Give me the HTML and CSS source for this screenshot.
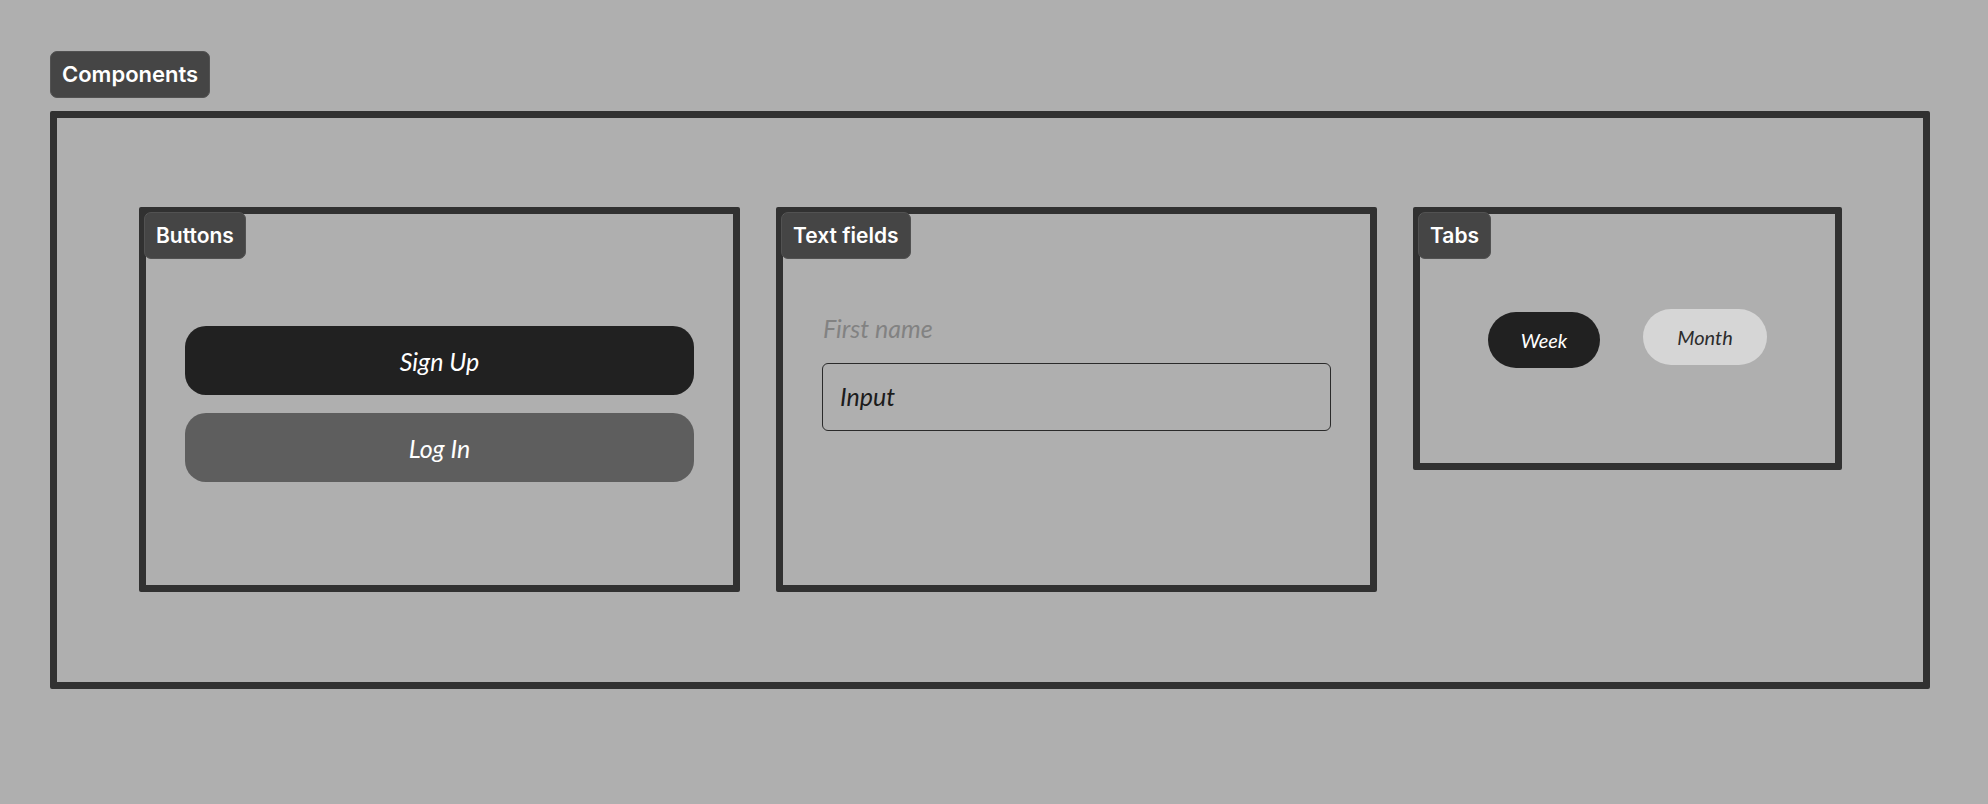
FILE: index.html
```html
<!DOCTYPE html>
<html lang="en">
<head>
  <meta charset="UTF-8">
  <meta name="viewport" content="width=device-width, initial-scale=1.0">
  <title>Components</title>
  <link rel="stylesheet" href="styles.css">
</head>
<body>
  <div class="badge page-badge">Components</div>

  <div class="frame">
    <section class="panel panel-wide">
      <div class="badge panel-badge">Buttons</div>
      <div class="button-stack">
        <button class="btn btn-primary">Sign Up</button>
        <button class="btn btn-secondary">Log In</button>
      </div>
    </section>

    <section class="panel panel-wide">
      <div class="badge panel-badge">Text fields</div>
      <div class="field">
        <label class="field-label" for="firstName">First name</label>
        <div class="field-input" id="firstName">Input</div>
      </div>
    </section>

    <section class="panel panel-tabs">
      <div class="badge panel-badge">Tabs</div>
      <div class="tabs">
        <span class="tab tab-active">Week</span>
        <span class="tab tab-idle">Month</span>
      </div>
    </section>
  </div>
</body>
</html>
```

FILE: styles.css
```css
body {
  margin: 0;
  padding: 51px 0 0 50px;
  background-color: #afafaf;
  font-family: Inter, "Noto Sans", sans-serif;
}
.badge {
  box-sizing: border-box;
  height: 47px;
  padding: 0 11px;
  background-color: #454545;
  border: 1px solid #525252;
  border-radius: 7px;
  color: #fff;
  font-size: 22px;
  font-weight: 600;
  line-height: 45px;
  white-space: nowrap;
}
.page-badge {
  display: inline-block;
  margin-bottom: 13px;
}
.frame {
  box-sizing: border-box;
  width: 1880px;
  height: 578px;
  border: 7px solid #313131;
  border-radius: 2px;
  display: flex;
  align-items: flex-start;
  gap: 36px;
  padding: 89px 0 0 82px;
}
.panel {
  position: relative;
  box-sizing: border-box;
  border: 7px solid #313131;
  border-radius: 2px;
}
.panel-wide {
  width: 601px;
  height: 385px;
  padding: 0 39px 0 39px;
}
.panel-tabs {
  width: 429px;
  height: 263px;
}
.panel-badge {
  position: absolute;
  top: -2px;
  left: -2px;
  font-size: 21px;
}

/* buttons */
.button-stack {
  display: flex;
  flex-direction: column;
  gap: 18px;
  padding-top: 112px;
}
.btn {
  height: 69px;
  border: none;
  border-radius: 21px;
  color: #fff;
  font-family: Lato, "Open Sans", sans-serif;
  font-style: italic;
  font-size: 25px;
}
.btn-primary {
  background-color: #212121;
}
.btn-secondary {
  background-color: #5e5e5e;
}

/* text field */
.field {
  padding-top: 97px;
}
.field-label {
  display: block;
  padding-left: 1px;
  margin-bottom: 18px;
  color: #828282;
  font-family: Lato, "Open Sans", sans-serif;
  font-style: italic;
  font-size: 25px;
  line-height: 34px;
}
.field-input {
  box-sizing: border-box;
  height: 68px;
  padding-left: 17px;
  border: 1.5px solid #2a2a2a;
  border-radius: 6px;
  color: #1c1c1c;
  font-family: Lato, "Open Sans", sans-serif;
  font-style: italic;
  font-size: 25px;
  line-height: 65px;
}

/* tabs */
.tabs {
  display: flex;
  align-items: center;
  gap: 43px;
  padding: 92px 0 0 68px;
}
.tab {
  height: 56px;
  border-radius: 28px;
  font-family: Lato, "Open Sans", sans-serif;
  font-style: italic;
  font-size: 20px;
  line-height: 56px;
  text-align: center;
}
.tab-active {
  width: 112px;
  margin-top: 6px;
  background-color: #212121;
  color: #fff;
}
.tab-idle {
  width: 124px;
  background-color: #d6d6d6;
  color: #2c2c2c;
}
```
